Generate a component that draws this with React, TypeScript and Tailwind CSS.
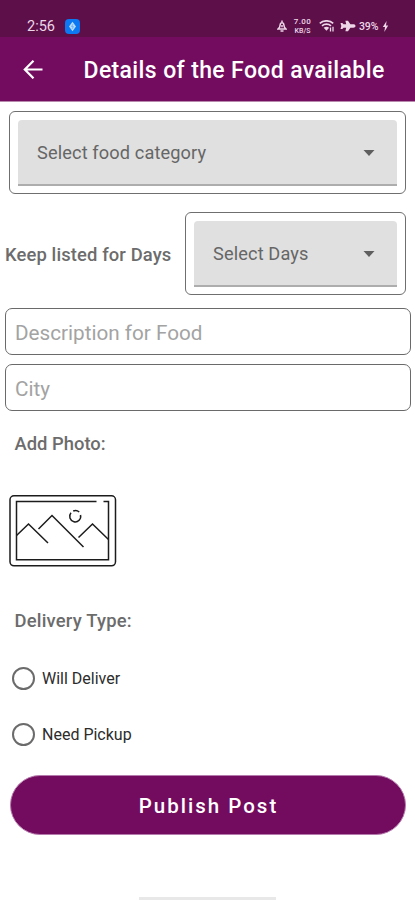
import React from 'react';

const DELIVERY_TYPES = ['Will Deliver', 'Need Pickup'];

function StatusBar() {
  return (
    <div className="h-[37px] bg-[#5d0f4a] flex pl-[27px] pt-[17px] text-[#ecd6e7]">
      <span className="text-[14.5px] leading-[19px] w-[38px]">2:56</span>
      <svg className="mt-[1.5px]" width="15" height="15" viewBox="0 0 15 15">
        <rect width="15" height="15" rx="4" fill="#0c78f2" />
        <path d="M7.5 2.8 11 7.4 7.5 12.2 4 7.4Z" fill="#b9dcff" />
        <path d="M7.9 5.2 6.6 7.6H8.4L7.1 9.9" stroke="#4b9cf5" strokeWidth="0.7" fill="none" />
      </svg>
      <svg className="ml-[197px] mt-[3px]" width="10" height="12" viewBox="0 0 10 12" fill="none" stroke="currentColor" strokeWidth="1.5">
        <path d="M1 9H9L7.4 7.2 6.6 3.8C6.2 2.4 3.8 2.4 3.4 3.8L2.6 7.2Z" />
        <path d="M5 .6V2.5M3.5 11H6.5M5 5V7.2" />
      </svg>
      <div className="ml-[6px] w-[19px] text-center font-medium">
        <div className="text-[8px] leading-[10px] tracking-[0.4px]">7.00</div>
        <div className="text-[7px] leading-[8px] tracking-[0.1px]">KB/S</div>
      </div>
      <svg className="ml-[7px] mt-[3px]" width="16" height="12" viewBox="0 0 16 12" fill="none" stroke="currentColor" strokeWidth="1.7">
        <path d="M.8 3.3C4.5 0 10.5 0 14.2 3.3M3 5.8C5.5 3.6 9.5 3.6 12 5.8" />
        <path d="M4.6 7.8C6.5 6.3 8.5 6.3 10.2 7.8L7.5 10.8Z" fill="currentColor" stroke="none" />
        <path d="M11.5 7.5V11.5M14 6.8V11.5" strokeWidth="1.3" />
      </svg>
      <svg className="ml-[5px] mt-[3px]" width="16" height="12" viewBox="0 0 16 12" fill="currentColor">
        <path d="M15.5 6C15.5 4.9 14.5 4.3 13.4 4.3H10.4L8 .8H5.4L6.2 4.3H3.6L2.3 3H.5L1.3 6 .5 9H2.3L3.6 7.7H6.2L5.4 11.2H8L10.4 7.7H13.4C14.5 7.7 15.5 7.1 15.5 6Z" />
      </svg>
      <span className="ml-[3px] text-[10.5px] leading-[19px] w-[21px] font-medium tracking-[-0.1px]">39%</span>
      <svg className="ml-[1.5px] mt-[4px]" width="7" height="11" viewBox="0 0 7 11" fill="currentColor">
        <path d="M4.6 0 .8 6H3L2.3 11 6.2 4.6H4Z" />
      </svg>
    </div>
  );
}

function Header() {
  return (
    <div className="h-[65px] bg-[#730c5e] border-b border-[#b888ad] flex items-center text-white">
      <svg className="ml-[23px]" width="20" height="20" viewBox="0 0 20 20" fill="none" stroke="currentColor" strokeWidth="2.2">
        <path d="M19.5 10.5H2.2M10.5 1.7 1.8 10.5 10.5 19.3" />
      </svg>
      <h1 className="ml-[40.5px] pt-[4px] text-[23px] font-medium tracking-[0.37px] whitespace-nowrap">Details of the Food available</h1>
    </div>
  );
}

function Dropdown({ label }: { label: string }) {
  return (
    <div className="h-[83px] border border-[#6f6f6f] rounded-[6px] px-[8px] pt-[8px]">
      <div className="h-[66px] bg-[#e0e0e0] border-b-2 border-[#adadad] rounded-t-[4px] flex items-center justify-between pl-[19px] pr-[22px]">
        <span className="pt-[1px] text-[18.2px] tracking-[0.12px] text-[#666666]">{label}</span>
        <svg className="mt-[1px]" width="12" height="6" viewBox="0 0 12 6">
          <path d="M.5 0H11.5L6 6Z" fill="#5f5f5f" />
        </svg>
      </div>
    </div>
  );
}

function Field({ placeholder }: { placeholder: string }) {
  return (
    <input
      placeholder={placeholder}
      className="block h-[47px] w-full border border-[#6a6a6a] rounded-[7px] px-[9px] pt-[3px] text-[20.7px] placeholder:text-[#a3a3a3]"
    />
  );
}

function PhotoPicker() {
  return (
    <svg className="ml-[9px] mt-[39px]" width="108" height="72" viewBox="0 0 108 72" fill="none" stroke="#1c1c1c" strokeWidth="1.5">
      <rect x="1" y=".8" width="105.5" height="70" rx="4" />
      <path d="M87.5 6.5H7.5V64.8H99.5V6.5H94.5" />
      <path d="M7.5 40.5 19.5 29 39 48M29.5 34 43 20.5 74.5 52M69.5 42.5 83.5 29 99.5 44.5" />
      <path d="M62 17.8A5.5 5.5 0 1 0 71.5 20M64.2 16A5.5 5.5 0 0 1 70.2 17" />
    </svg>
  );
}

export default function App() {
  return (
    <div className="w-[415px] h-[900px] bg-white overflow-hidden flex flex-col font-['Roboto',sans-serif]">
      <StatusBar />
      <Header />
      <div className="mx-[9px] mt-[9px]">
        <Dropdown label="Select food category" />
      </div>
      <div className="mt-[18px] mr-[9px] flex items-center">
        <span className="ml-[5px] w-[180px] pt-[2px] text-[18.4px] font-medium tracking-[0.12px] text-[#6c6c6c] whitespace-nowrap">Keep listed for Days</span>
        <div className="flex-1">
          <Dropdown label="Select Days" />
        </div>
      </div>
      <div className="mt-[13px] ml-[5px] mr-[4px] flex flex-col gap-[9px]">
        <Field placeholder="Description for Food" />
        <Field placeholder="City" />
      </div>
      <h2 className="ml-[14.5px] mt-[20px] h-[25px] leading-[25px] text-[18.4px] font-medium text-[#6c6c6c]">Add Photo:</h2>
      <PhotoPicker />
      <h2 className="ml-[14.5px] mt-[41px] h-[25px] leading-[25px] text-[18.4px] font-medium tracking-[0.2px] text-[#6c6c6c]">Delivery Type:</h2>
      <div className="mt-[33px] ml-[12px] flex flex-col gap-[32px]">
        {DELIVERY_TYPES.map((type) => (
          <label key={type} className="flex items-center h-[24px]">
            <input type="radio" name="delivery" className="appearance-none w-[23px] h-[23px] rounded-full border-2 border-[#6b6b6b]" />
            <span className="ml-[7px] pt-[1px] text-[16px] text-[#2c2c2c]">{type}</span>
          </label>
        ))}
      </div>
      <button className="mt-[29px] ml-[10px] mr-[9px] h-[60px] shrink-0 rounded-full bg-[#730c5e] border border-[#b57aac] text-white text-[20.5px] font-medium tracking-[2px] pt-[2px] pl-[1px]">
        Publish Post
      </button>
      <div className="mt-auto ml-[139px] w-[137px] h-[3px] bg-[#e8e8e8]" />
    </div>
  );
}
